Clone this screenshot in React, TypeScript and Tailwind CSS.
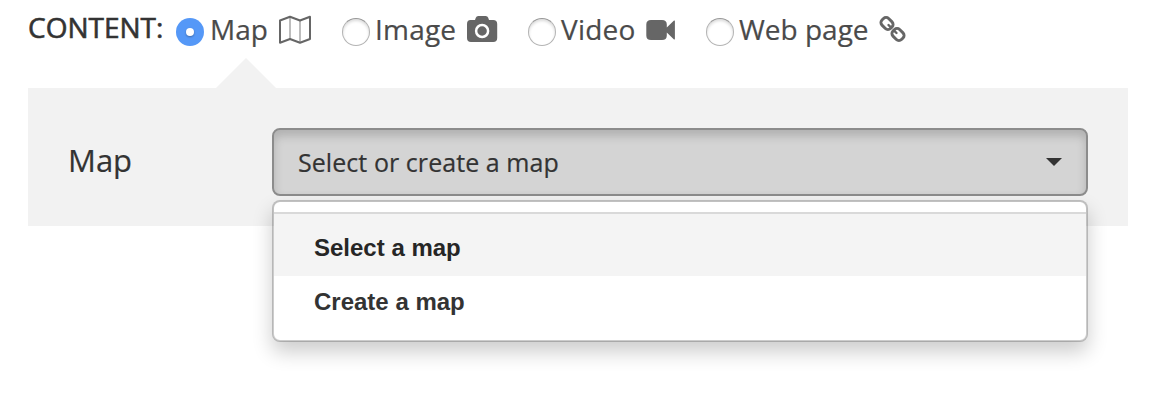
import React from "react";

function MapIcon() {
  return (
    <svg className="mt-[15px] h-[30px] w-[34px] shrink-0" viewBox="0 0 34 30" fill="none">
      <path d="M12 2V24.5M22 5.5V28" stroke="#a8a8a8" strokeWidth="1.5" />
      <path d="M2 5.5L12 1.8L22 5.5L32 1.8V24L22 27.7L12 24L2 27.7Z" stroke="#666" strokeWidth="2" strokeLinejoin="round" />
    </svg>
  );
}

function CameraIcon() {
  return (
    <svg className="mt-[15px] h-[28px] w-[32px] shrink-0" viewBox="0 0 32 28">
      <path d="M4.5 5H9L9.8 2.8Q10.4 1 12.3 1H19.7Q21.6 1 22.2 2.8L23 5H27.2Q31.2 5 31.2 9V23Q31.2 27 27.2 27H5Q1 27 1 23V9Q1 5 4.5 5Z" fill="#666" />
      <circle cx="16.1" cy="16" r="6" fill="#666" stroke="#fff" strokeWidth="2.5" />
    </svg>
  );
}

function VideoIcon() {
  return (
    <svg className="mt-[19px] h-[22px] w-[30px] shrink-0" viewBox="0 0 30 22">
      <path d="M5 1H16Q20.8 1 20.8 5.5V8.5L28 1.6Q28.9 1 28.9 2.2V19.8Q28.9 21 28 20.4L20.8 13.5V16.5Q20.8 21 16 21H5Q.3 21 .3 16.5V5.5Q.3 1 5 1Z" fill="#666" />
    </svg>
  );
}

function LinkIcon() {
  return (
    <svg className="mt-[15px] h-[28px] w-[28px] shrink-0" viewBox="0 0 28 28" fill="none" stroke="#666" strokeWidth="2.9">
      <rect x="-6" y="-4.7" width="12" height="9.4" rx="3.6" transform="translate(8 8.5) rotate(45)" />
      <rect x="-6" y="-4.7" width="12" height="9.4" rx="3.6" transform="translate(19 19.5) rotate(45)" />
      <path d="M9.5 10L12.2 12.7M14.8 15.3L17.5 18" strokeWidth="2.4" strokeLinecap="round" />
    </svg>
  );
}

function Radio({ checked = false }: { checked?: boolean }) {
  return checked ? (
    <span className="mt-[18px] flex size-7 shrink-0 items-center justify-center rounded-full bg-[#5598f7]">
      <span className="size-2 rounded-full bg-white shadow-[0_1px_2px_rgba(0,0,0,0.3)]" />
    </span>
  ) : (
    <span className="mt-[18px] size-7 shrink-0 rounded-full border border-[#b4b4b4] border-t-[#989898] bg-white shadow-[inset_0_2px_3px_rgba(0,0,0,0.14)]" />
  );
}

const label = "shrink-0 whitespace-nowrap pt-[9px] leading-10 text-[#4a4a4a] [-webkit-text-stroke:0.2px_#4a4a4a]";

export default function App() {
  return (
    <main className="h-[406px] w-[1166px] overflow-hidden bg-white font-['Open_Sans','Noto_Sans',sans-serif] text-[28px] text-[#333]">
      <div className="flex h-[58px] items-start pl-[28px]">
        <span className="w-[148px] shrink-0 pt-[7px] leading-10 [-webkit-text-stroke:0.6px_#333]">CONTENT:</span>
        <label className="flex w-[166px] shrink-0 items-start">
          <Radio checked />
          <span className={label + " ml-[6px] w-[68px]"}>Map</span>
          <MapIcon />
        </label>
        <label className="flex w-[186px] shrink-0 items-start">
          <Radio />
          <span className={label + " ml-[5px] w-[91px] tracking-[0.2px]"}>Image</span>
          <CameraIcon />
        </label>
        <label className="flex w-[178px] shrink-0 items-start">
          <Radio />
          <span className={label + " ml-[5px] w-[85px] tracking-[0.2px]"}>Video</span>
          <VideoIcon />
        </label>
        <label className="flex items-start">
          <Radio />
          <span className={label + " ml-[5px] w-[140px]"}>Web page</span>
          <LinkIcon />
        </label>
      </div>
      <div className="ml-[216px] h-[30px] w-[60px] bg-[#f2f2f2] [clip-path:polygon(50%_0,100%_100%,0_100%)]" />
      <section className="ml-[28px] flex h-[138px] w-[1100px] items-start bg-[#f2f2f2] pt-10 pl-10">
        <span className="w-[204px] shrink-0 pt-[11px] text-[31px] leading-[42px] [-webkit-text-stroke:0.2px_#333]">Map</span>
        <div className="relative w-[816px]">
          <button className="flex h-[68px] w-full items-center justify-between rounded-[8px] border-2 border-[#8c8c8c] bg-[#d4d4d4] px-6 text-[25px] shadow-[inset_0_6px_10px_rgba(0,0,0,0.17)]">
            <span className="leading-10 tracking-[0.06px] [-webkit-text-stroke:0.2px_#333]">Select or create a map</span>
            <svg className="h-2 w-4" viewBox="0 0 16 8"><path d="M0 0H16L8 8Z" fill="#333" /></svg>
          </button>
          <ul className="absolute top-[72px] left-0 h-[142px] w-full rounded-[8px] border-2 border-black/20 bg-white bg-clip-padding pt-[10px] font-['Liberation_Sans',Arial,sans-serif] text-[24px] font-bold shadow-[0_10px_20px_rgba(0,0,0,0.2)]">
            <li className="h-16 border-t-2 border-[#d9d9d9] bg-[#f4f4f4] pl-10 leading-[68px] text-[#262626]">Select a map</li>
            <li className="h-[52px] pl-10 leading-[51px]">Create a map</li>
          </ul>
        </div>
      </section>
    </main>
  );
}
